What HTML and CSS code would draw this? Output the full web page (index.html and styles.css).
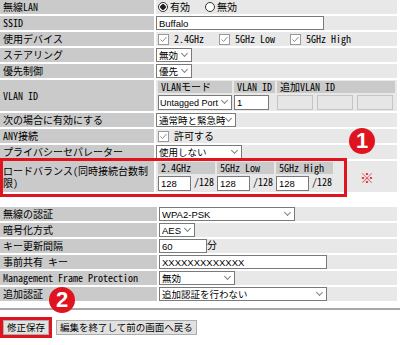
FILE: index.html
```html
<!DOCTYPE html>
<html lang="ja">
<head>
  <meta charset="UTF-8">
  <title>無線設定</title>
  <link rel="stylesheet" href="styles.css">
</head>
<body>

  <!-- Basic settings -->
  <div class="sect">
    <table class="form">
      <tr>
        <th>無線LAN</th>
        <td>
          <label class="opt"><input type="radio" name="wlan" checked>有効</label>
          <label class="opt"><input type="radio" name="wlan">無効</label>
        </td>
      </tr>
      <tr>
        <th>SSID</th>
        <td><input class="txt w-long" type="text" value="Buffalo"></td>
      </tr>
      <tr>
        <th>使用デバイス</th>
        <td>
          <label class="opt"><span class="chk"><svg viewBox="0 0 11 11" width="11" height="11"><rect x="0.5" y="0.5" width="10" height="10" fill="#fff" stroke="#9a9a9a"/><path d="M2.5 5.5 L4.5 7.5 L8.5 3" fill="none" stroke="#8a8a8a" stroke-width="1"/></svg></span><span class="mono">2.4GHz</span></label>
          <label class="opt"><span class="chk"><svg viewBox="0 0 11 11" width="11" height="11"><rect x="0.5" y="0.5" width="10" height="10" fill="#fff" stroke="#9a9a9a"/><path d="M2.5 5.5 L4.5 7.5 L8.5 3" fill="none" stroke="#8a8a8a" stroke-width="1"/></svg></span><span class="mono">5GHz Low</span></label>
          <label class="opt"><span class="chk"><svg viewBox="0 0 11 11" width="11" height="11"><rect x="0.5" y="0.5" width="10" height="10" fill="#fff" stroke="#9a9a9a"/><path d="M2.5 5.5 L4.5 7.5 L8.5 3" fill="none" stroke="#8a8a8a" stroke-width="1"/></svg></span><span class="mono">5GHz High</span></label>
        </td>
      </tr>
      <tr>
        <th>ステアリング</th>
        <td><span class="sel w-short"><select><option>無効</option></select></span></td>
      </tr>
      <tr>
        <th>優先制御</th>
        <td><span class="sel w-short"><select><option>優先</option></select></span></td>
      </tr>
      <tr>
        <th>VLAN ID</th>
        <td>
          <table class="sub vlan">
            <tr>
              <th class="c-mode">VLANモード</th>
              <th class="c-id">VLAN ID</th>
              <th colspan="3">追加VLAN ID</th>
            </tr>
            <tr>
              <td><span class="sel w-mode"><select><option>Untagged Port</option></select></span></td>
              <td><input class="txt w-id" type="text" value="1"></td>
              <td><input class="txt w-add" type="text" disabled></td>
              <td><input class="txt w-add" type="text" disabled></td>
              <td><input class="txt w-add" type="text" disabled></td>
            </tr>
          </table>
        </td>
      </tr>
      <tr>
        <th>次の場合に有効にする</th>
        <td><span class="sel w-when"><select><option>通常時と緊急時</option></select></span></td>
      </tr>
      <tr>
        <th>ANY接続</th>
        <td>
          <label class="opt"><span class="chk"><svg viewBox="0 0 11 11" width="11" height="11"><rect x="0.5" y="0.5" width="10" height="10" fill="#fff" stroke="#9a9a9a"/><path d="M2.5 5.5 L4.5 7.5 L8.5 3" fill="none" stroke="#8a8a8a" stroke-width="1"/></svg></span>許可する</label>
        </td>
      </tr>
      <tr>
        <th>プライバシーセパレーター</th>
        <td><span class="sel w-priv"><select><option>使用しない</option></select></span></td>
      </tr>
      <tr>
        <th>ロードバランス(同時接続台数制限)</th>
        <td>
          <div class="lb-wrap">
            <table class="sub lb">
              <tr>
                <th>2.4GHz</th>
                <th>5GHz Low</th>
                <th>5GHz High</th>
              </tr>
              <tr>
                <td><input class="txt w-lb" type="text" value="128"><span class="max">/128</span></td>
                <td><input class="txt w-lb" type="text" value="128"><span class="max">/128</span></td>
                <td><input class="txt w-lb" type="text" value="128"><span class="max">/128</span></td>
              </tr>
            </table>
            <span class="note">※</span>
          </div>
        </td>
      </tr>
    </table>

    <!-- annotations -->
    <div class="mark mark-lb"></div>
    <span class="num num-1">1</span>
  </div>

  <!-- Security settings -->
  <div class="sect">
    <table class="form">
      <tr>
        <th>無線の認証</th>
        <td><span class="sel w-auth"><select><option>WPA2-PSK</option></select></span></td>
      </tr>
      <tr>
        <th>暗号化方式</th>
        <td><span class="sel w-short"><select><option>AES</option></select></span></td>
      </tr>
      <tr>
        <th>キー更新間隔</th>
        <td><input class="txt w-key" type="text" value="60">分</td>
      </tr>
      <tr>
        <th>事前共有 キー</th>
        <td><input class="txt w-long" type="text" value="XXXXXXXXXXXXX"></td>
      </tr>
      <tr>
        <th class="mono">Management Frame Protection</th>
        <td><span class="sel w-mfp"><select><option>無効</option></select></span></td>
      </tr>
      <tr>
        <th>追加認証</th>
        <td><span class="sel w-long"><select><option>追加認証を行わない</option></select></span></td>
      </tr>
    </table>
    <span class="num num-2">2</span>
  </div>

  <hr class="rule">

  <div class="actions">
    <span class="save-wrap"><button>修正保存</button></span>
    <button>編集を終了して前の画面へ戻る</button>
  </div>

</body>
</html>
```

FILE: styles.css
```css
/* ====== RESET ====== */
html, body {
  margin: 0;
  padding: 0;
}

body {
  background: #fff;
  color: #000;
  font-family: "Noto Sans Mono CJK JP", "Noto Sans CJK JP", sans-serif;
  font-size: 10px;
  line-height: 12px;
  width: 400px;
  height: 345px;
  overflow: hidden;
}

.mono {
  font-family: "Noto Sans Mono CJK JP", "Liberation Mono", monospace;
}

/* ====== FORM TABLES ====== */
.sect {
  position: relative;
}

.sect + .sect {
  margin-top: 13px;
}

.form {
  border-spacing: 2px;
  margin: -2px 0 0 -2px;
  width: 401px;
}

.form > tbody > tr > th {
  width: 152px;
  background: #cacaca;
  font-weight: normal;
  text-align: left;
  padding: 1px 2px 1px 3px;
}

.form > tbody > tr > td {
  background: #e8e8e8;
  padding: 0;
  height: 14px;
  white-space: nowrap;
}

/* sub tables (VLAN, load balance) */
.sub {
  border-spacing: 2px;
  margin: -1px 0;
}

.sub th {
  background: #cacaca;
  font-weight: normal;
  text-align: left;
  padding: 0 3px;
  height: 12px;
  line-height: 12px;
  white-space: nowrap;
}

.sub td {
  padding: 0;
}

.vlan .c-mode { width: 68px; }
.vlan .c-id { width: 34px; }

.lb th { width: 51px; }

.lb-wrap {
  display: flex;
  align-items: center;
}

.note {
  color: #e0141e;
  font-size: 14px;
  margin-left: 25px;
}

.max {
  margin-left: 3px;
}

/* ====== CONTROLS ====== */
.opt {
  display: inline-flex;
  align-items: center;
  vertical-align: top;
  height: 14px;
  margin: 0 8px 0 1px;
}

.opt input[type="radio"] {
  appearance: none;
  width: 10px;
  height: 10px;
  margin: 0 2px 0 1px;
  border: 1px solid #333;
  border-radius: 50%;
  background: #fff;
}

.opt input[type="radio"]:checked {
  background: radial-gradient(circle, #222 0 2.5px, #fff 3px);
}

.chk {
  display: inline-flex;
  margin: 0 5px 0 1px;
}

.txt {
  box-sizing: border-box;
  height: 14px;
  border: 1px solid #7a7a7a;
  background: #fff;
  font-family: "Liberation Sans", "Noto Sans CJK JP", sans-serif;
  font-size: 9.5px;
  padding: 0 2px;
  margin: 0;
  vertical-align: top;
}

.sub .txt {
  height: 15px;
}

.txt:disabled {
  background: #e6e6e6;
  border-color: #c4c4c4;
}

.sel {
  position: relative;
  display: inline-block;
  vertical-align: top;
}

.sel select {
  appearance: none;
  box-sizing: border-box;
  width: 100%;
  height: 14px;
  border: 1px solid #7a7a7a;
  background: #fff;
  color: #000;
  font-family: "Liberation Sans", "Noto Sans CJK JP", sans-serif;
  font-size: 9.5px;
  padding: 0 10px 0 2px;
  margin: 0;
  display: block;
}

.sub .sel select {
  height: 15px;
  font-size: 9px;
  padding: 0 8px 0 1px;
}

.sel::after {
  content: "";
  position: absolute;
  right: 5px;
  top: 3px;
  width: 4px;
  height: 4px;
  border-right: 1px solid #808080;
  border-bottom: 1px solid #808080;
  transform: rotate(45deg);
}

.w-long { width: 168px; }
.w-short { width: 36px; }
.w-mode { width: 74px; }
.w-id { width: 35px; }
.w-add { width: 36px; margin-right: 2px; }
.w-when { width: 80px; }
.w-priv { width: 86px; }
.w-lb { width: 33px; }
.w-auth { width: 136px; }
.w-key { width: 48px; }
.w-mfp { width: 76px; }

/* ====== ANNOTATIONS ====== */
.mark {
  position: absolute;
  border: 3px solid #e0141e;
  pointer-events: none;
}

.mark-lb {
  left: 0;
  top: 160px;
  width: 341px;
  height: 33px;
}

.num {
  position: absolute;
  width: 26px;
  height: 26px;
  border-radius: 50%;
  background: #e0141e;
  color: #fff;
  font-family: "Liberation Sans", sans-serif;
  font-weight: bold;
  font-size: 22px;
  line-height: 26px;
  text-align: center;
}

.num-1 {
  left: 349px;
  top: 130px;
}

.num-2 {
  left: 49px;
  top: 82px;
}

/* ====== FOOTER ====== */
.rule {
  border: 0;
  border-top: 2px solid #a8a8a8;
  margin: 5px 0 0;
}

.actions {
  display: flex;
  align-items: center;
  gap: 7px;
  padding: 10px 0 0 3px;
}

.actions button {
  font-family: "Noto Sans CJK JP", sans-serif;
  font-size: 9.5px;
  line-height: 11px;
  height: 15px;
  background: #e1e1e1;
  border: 1px solid #adadad;
  padding: 0 3px;
}

.save-wrap {
  display: inline-flex;
  outline: 3px solid #e0141e;
}
```
